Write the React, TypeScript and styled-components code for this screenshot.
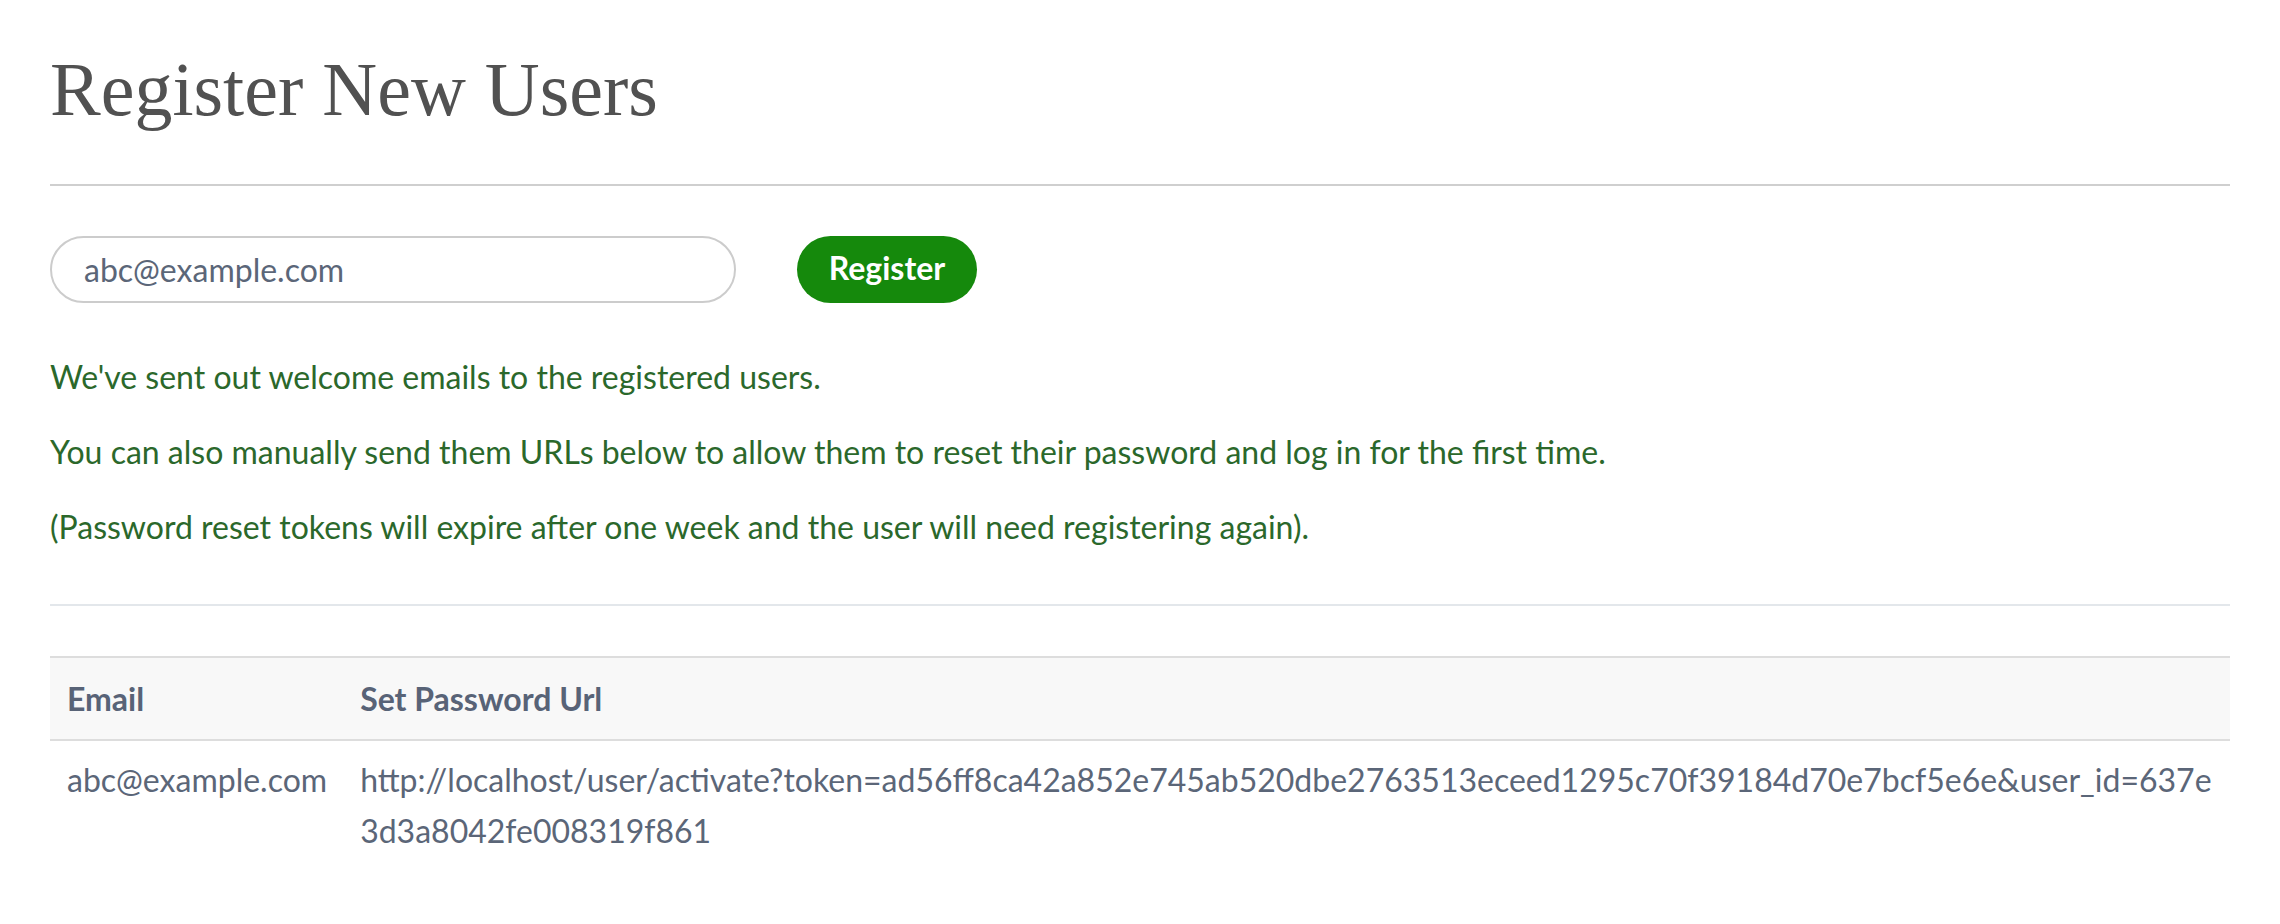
import React from "react";
import styled, { createGlobalStyle } from "styled-components";

const GlobalStyle = createGlobalStyle`
  html, body {
    margin: 0;
    padding: 0;
    background: #ffffff;
  }
  body {
    font-family: Lato, "Noto Sans", sans-serif;
    font-size: 32px;
    line-height: 1.6;
    color: #5b6678;
  }
  * { box-sizing: border-box; }
`;

const Page = styled.main`
  padding: 46px 50px 40px;
  width: 2280px;
`;

const Title = styled.h1`
  margin: 0;
  font-family: "Liberation Serif", "DejaVu Serif", serif;
  font-weight: 400;
  font-size: 76px;
  line-height: 86px;
  color: #515151;
`;

const Rule = styled.hr<{ $light?: boolean }>`
  border: 0;
  height: 2px;
  margin: 52px 0 50px;
  background: ${(p) => (p.$light ? "#e3e7eb" : "#cfcfcf")};
`;

const FormRow = styled.form`
  display: flex;
  align-items: center;
  gap: 61px;
`;

const EmailInput = styled.input`
  width: 686px;
  height: 67px;
  border: 2px solid #cccccc;
  border-radius: 34px;
  padding: 0 32px;
  font-family: Lato, "Noto Sans", sans-serif;
  font-size: 32px;
  color: #5b6678;
  background: #fff;
  outline: none;
  &::placeholder { color: #5b6678; }
`;

const RegisterButton = styled.button`
  width: 180px;
  height: 67px;
  border: 0;
  border-radius: 34px;
  background: #15890c;
  color: #ffffff;
  font-family: Lato, "Noto Sans", sans-serif;
  font-weight: 700;
  font-size: 32px;
  line-height: 1;
  padding: 0 0 3px;
  cursor: pointer;
`;

const Messages = styled.section`
  margin-top: 48px;
`;

const Message = styled.p`
  margin: 0 0 24px;
  color: #2b682b;
  line-height: 51px;
  &:last-child { margin-bottom: 0; }
`;

const Table = styled.table`
  width: 100%;
  border-collapse: collapse;
`;

const HeadCell = styled.th<{ $fill?: boolean }>`
  text-align: left;
  font-weight: 700;
  background: #f8f8f8;
  border-top: 2px solid #dddddd;
  border-bottom: 2px solid #dddddd;
  padding: 15px 16px 15px 17px;
  line-height: 51px;
  color: #586377;
  white-space: nowrap;
  width: ${(p) => (p.$fill ? "100%" : "auto")};
`;

const Cell = styled.td<{ $wrap?: boolean }>`
  padding: 13px 16px 13px 17px;
  line-height: 51px;
  vertical-align: top;
  color: #5b6678;
  white-space: ${(p) => (p.$wrap ? "normal" : "nowrap")};
  word-break: ${(p) => (p.$wrap ? "break-all" : "normal")};
`;

const rows = [
  {
    email: "abc@example.com",
    url: "http://localhost/user/activate?token=ad56ff8ca42a852e745ab520dbe2763513eceed1295c70f39184d70e7bcf5e6e&user_id=637e3d3a8042fe008319f861",
  },
];

export default function App() {
  return (
    <>
      <GlobalStyle />
      <Page>
        <Title>Register New Users</Title>
        <Rule />
        <FormRow onSubmit={(e) => e.preventDefault()}>
          <EmailInput type="text" defaultValue="abc@example.com" />
          <RegisterButton type="submit">Register</RegisterButton>
        </FormRow>
        <Messages>
          <Message>We've sent out welcome emails to the registered users.</Message>
          <Message>
            You can also manually send them URLs below to allow them to reset their password and log in for the first time.
          </Message>
          <Message>
            (Password reset tokens will expire after one week and the user will need registering again).
          </Message>
        </Messages>
        <Rule $light />
        <Table>
          <thead>
            <tr>
              <HeadCell>Email</HeadCell>
              <HeadCell $fill>Set Password Url</HeadCell>
            </tr>
          </thead>
          <tbody>
            {rows.map((r) => (
              <tr key={r.email}>
                <Cell>{r.email}</Cell>
                <Cell $wrap>{r.url}</Cell>
              </tr>
            ))}
          </tbody>
        </Table>
      </Page>
    </>
  );
}
